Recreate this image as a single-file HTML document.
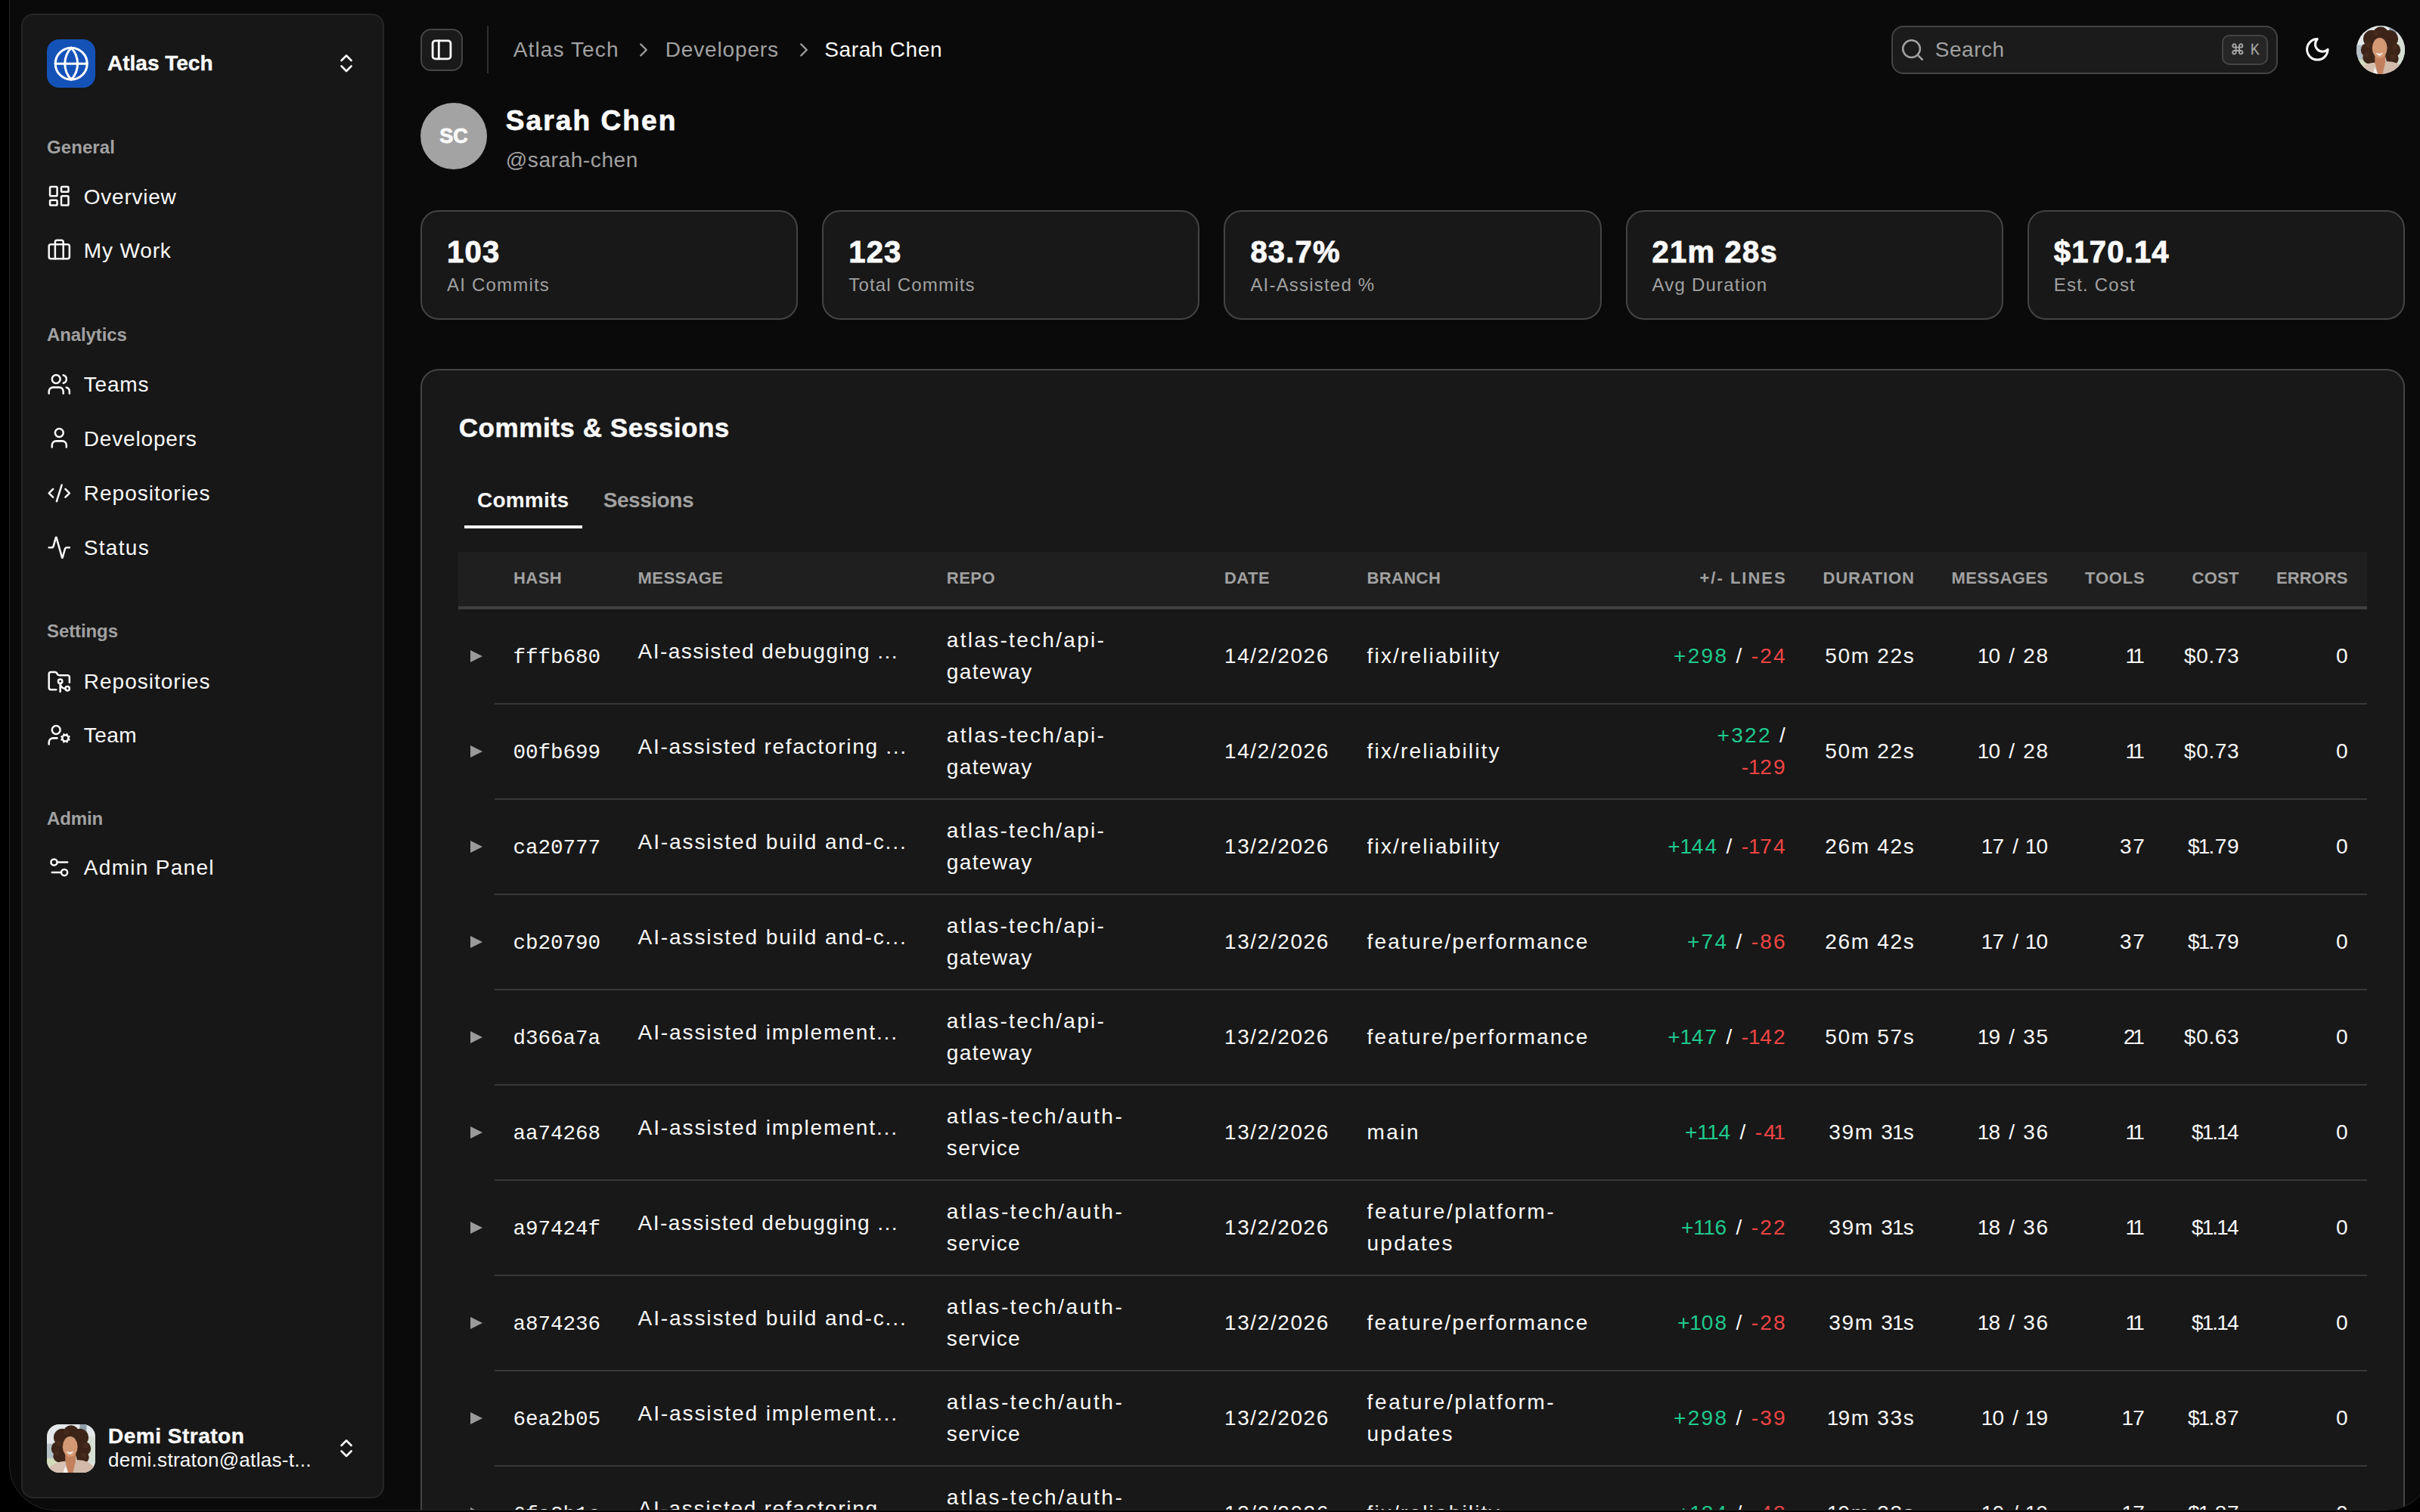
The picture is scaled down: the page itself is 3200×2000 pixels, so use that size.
<!DOCTYPE html>
<html><head><meta charset="utf-8"><title>Sarah Chen - Atlas Tech</title>
<style>
html,body{margin:0;padding:0;background:#000;width:3200px;height:2000px;overflow:hidden}
@media (max-width:2400px){html{zoom:0.5}}
body{position:relative;font-family:"Liberation Sans",sans-serif;color:#fafafa}
#win{position:absolute;left:12px;top:-200px;width:3204px;height:2198px;box-sizing:border-box;background:#0a0a0a;border:1px solid #242424;border-radius:0 0 60px 60px;overflow:hidden}
#c{position:absolute;left:-13px;top:199px;width:3200px;height:2000px}
.t{position:absolute;white-space:nowrap;line-height:1}
</style></head><body>
<div id="win"><div id="c">
<div style="position:absolute;left:28px;top:18px;width:480px;height:1964px;box-sizing:border-box;background:#171717;border:2px solid #262626;border-radius:16px;"></div>
<div style="position:absolute;left:62px;top:52px;width:64px;height:64px;background:#1552b8;border-radius:16px;"></div>
<svg style="position:absolute;left:68.8px;top:58.8px;" width="50.4" height="50.4" viewBox="0 0 24 24" fill="none" stroke="#fff" stroke-width="1.45" stroke-linecap="round" stroke-linejoin="round"><circle cx="12" cy="12" r="10"/><path d="M12 2a14.5 14.5 0 0 0 0 20 14.5 14.5 0 0 0 0-20"/><path d="M2 12h20"/></svg>
<div class="t" style="left:142.00px;top:69.89px;font-size:28px;font-weight:700;color:#fafafa;letter-spacing:0px;-webkit-text-stroke:0.4px #fafafa;">Atlas Tech</div>
<svg style="position:absolute;left:440px;top:64px;" width="36" height="40" viewBox="440 64 36 40" fill="none" stroke="#fafafa" stroke-width="2.6" stroke-linecap="round" stroke-linejoin="round"><path d="M451.5 80 L458 73.5 L464.5 80 M451.5 87.5 L458 94 L464.5 87.5"/></svg>
<div class="t" style="left:62.00px;top:182.68px;font-size:24px;font-weight:700;color:#a1a1a1;letter-spacing:0.08px;">General</div>
<svg style="position:absolute;left:61.75px;top:243.4px;" width="32.6" height="32.6" viewBox="0 0 24 24" fill="none" stroke="#fafafa" stroke-width="1.85" stroke-linecap="round" stroke-linejoin="round"><rect width="7" height="9" x="3" y="3" rx="1"/><rect width="7" height="5" x="14" y="3" rx="1"/><rect width="7" height="9" x="14" y="12" rx="1"/><rect width="7" height="5" x="3" y="16" rx="1"/></svg>
<div class="t" style="left:110.80px;top:246.79px;font-size:28px;font-weight:400;color:#fafafa;letter-spacing:0.76px;">Overview</div>
<svg style="position:absolute;left:61.75px;top:314.9px;" width="32.6" height="32.6" viewBox="0 0 24 24" fill="none" stroke="#fafafa" stroke-width="1.85" stroke-linecap="round" stroke-linejoin="round"><path d="M16 20V4a2 2 0 0 0-2-2h-4a2 2 0 0 0-2 2v16"/><rect width="20" height="14" x="2" y="6" rx="2"/></svg>
<div class="t" style="left:110.80px;top:318.29px;font-size:28px;font-weight:400;color:#fafafa;letter-spacing:0.85px;">My Work</div>
<div class="t" style="left:62.00px;top:430.68px;font-size:24px;font-weight:700;color:#a1a1a1;letter-spacing:-0.1px;">Analytics</div>
<svg style="position:absolute;left:61.75px;top:491.9px;" width="32.6" height="32.6" viewBox="0 0 24 24" fill="none" stroke="#fafafa" stroke-width="1.85" stroke-linecap="round" stroke-linejoin="round"><path d="M16 21v-2a4 4 0 0 0-4-4H6a4 4 0 0 0-4 4v2"/><circle cx="9" cy="7" r="4"/><path d="M22 21v-2a4 4 0 0 0-3-3.87"/><path d="M16 3.13a4 4 0 0 1 0 7.75"/></svg>
<div class="t" style="left:110.80px;top:495.29px;font-size:28px;font-weight:400;color:#fafafa;letter-spacing:0.78px;">Teams</div>
<svg style="position:absolute;left:61.75px;top:563.4px;" width="32.6" height="32.6" viewBox="0 0 24 24" fill="none" stroke="#fafafa" stroke-width="1.85" stroke-linecap="round" stroke-linejoin="round"><path d="M19 21v-2a4 4 0 0 0-4-4H9a4 4 0 0 0-4 4v2"/><circle cx="12" cy="7" r="4"/></svg>
<div class="t" style="left:110.80px;top:566.79px;font-size:28px;font-weight:400;color:#fafafa;letter-spacing:0.82px;">Developers</div>
<svg style="position:absolute;left:61.75px;top:635.9px;" width="32.6" height="32.6" viewBox="0 0 24 24" fill="none" stroke="#fafafa" stroke-width="1.85" stroke-linecap="round" stroke-linejoin="round"><path d="m18 16 4-4-4-4"/><path d="m6 8-4 4 4 4"/><path d="m14.5 4-5 16"/></svg>
<div class="t" style="left:110.80px;top:639.29px;font-size:28px;font-weight:400;color:#fafafa;letter-spacing:1.0px;">Repositories</div>
<svg style="position:absolute;left:61.75px;top:707.9px;" width="32.6" height="32.6" viewBox="0 0 24 24" fill="none" stroke="#fafafa" stroke-width="1.85" stroke-linecap="round" stroke-linejoin="round"><path d="M22 12h-2.48a2 2 0 0 0-1.93 1.46l-2.35 8.36a.25.25 0 0 1-.48 0L9.24 2.18a.25.25 0 0 0-.48 0l-2.35 8.36A2 2 0 0 1 4.49 12H2"/></svg>
<div class="t" style="left:110.80px;top:711.29px;font-size:28px;font-weight:400;color:#fafafa;letter-spacing:1.3px;">Status</div>
<div class="t" style="left:62.00px;top:822.68px;font-size:24px;font-weight:700;color:#a1a1a1;letter-spacing:-0.1px;">Settings</div>
<svg style="position:absolute;left:61.75px;top:884.5px;" width="32.6" height="32.6" viewBox="0 0 24 24" fill="none" stroke="#fafafa" stroke-width="1.85" stroke-linecap="round" stroke-linejoin="round"><path d="M9 20H4a2 2 0 0 1-2-2V5a2 2 0 0 1 2-2h3.9a2 2 0 0 1 1.69.9l.81 1.2a2 2 0 0 0 1.67.9H20a2 2 0 0 1 2 2v5"/><circle cx="13" cy="12" r="2"/><path d="M18 19c-2.8 0-5-2.2-5-5v8"/><circle cx="20" cy="19" r="2"/></svg>
<div class="t" style="left:110.80px;top:887.89px;font-size:28px;font-weight:400;color:#fafafa;letter-spacing:1.0px;">Repositories</div>
<svg style="position:absolute;left:61.75px;top:955.9px;" width="32.6" height="32.6" viewBox="0 0 24 24" fill="none" stroke="#fafafa" stroke-width="1.85" stroke-linecap="round" stroke-linejoin="round"><path d="M10 15H6a4 4 0 0 0-4 4v2"/><path d="m14.305 16.53.923-.382"/><path d="m15.228 13.852-.923-.383"/><path d="m16.852 12.228-.383-.923"/><path d="m16.852 17.772-.383.924"/><path d="m19.148 12.228.383-.923"/><path d="m19.53 18.696-.382-.924"/><path d="m20.772 13.852.924-.383"/><path d="m20.772 16.148.924.383"/><circle cx="18" cy="15" r="3"/><circle cx="9" cy="7" r="4"/></svg>
<div class="t" style="left:110.80px;top:959.29px;font-size:28px;font-weight:400;color:#fafafa;letter-spacing:0.45px;">Team</div>
<div class="t" style="left:62.00px;top:1071.18px;font-size:24px;font-weight:700;color:#a1a1a1;letter-spacing:-0.15px;">Admin</div>
<svg style="position:absolute;left:61.75px;top:1130.9px;" width="32.6" height="32.6" viewBox="0 0 24 24" fill="none" stroke="#fafafa" stroke-width="1.85" stroke-linecap="round" stroke-linejoin="round"><path d="M20 7h-9"/><path d="M14 17H5"/><circle cx="17" cy="17" r="3"/><circle cx="7" cy="7" r="3"/></svg>
<div class="t" style="left:110.80px;top:1134.29px;font-size:28px;font-weight:400;color:#fafafa;letter-spacing:1.3px;">Admin Panel</div>
<div style="position:absolute;left:62px;top:1884px;width:64px;height:64px;border-radius:16px;overflow:hidden"><svg width="100%" height="100%" viewBox="0 0 100 100" preserveAspectRatio="none" style="display:block"><rect width="100" height="100" fill="#e4e8ea"/><rect x="0" y="40" width="25" height="35" fill="#b3c0c6"/><rect x="0" y="70" width="30" height="20" fill="#d3dcbc"/><rect x="68" y="0" width="14" height="90" fill="#8f9dab"/><rect x="84" y="25" width="16" height="55" fill="#d6dfd3"/><g fill="#3d2519"><circle cx="32" cy="27" r="18"/><circle cx="50" cy="18" r="16"/><circle cx="68" cy="27" r="18"/><circle cx="24" cy="50" r="15"/><circle cx="76" cy="50" r="15"/><circle cx="26" cy="66" r="13"/><circle cx="74" cy="68" r="13"/><circle cx="50" cy="45" r="24"/><circle cx="34" cy="76" r="8"/><circle cx="68" cy="80" r="7"/></g><g fill="#5c3a28" opacity="0.35"><circle cx="24" cy="40" r="6"/><circle cx="20" cy="60" r="5"/><circle cx="80" cy="44" r="5"/><circle cx="40" cy="16" r="5"/><circle cx="76" cy="64" r="5"/></g><rect x="38" y="58" width="22" height="42" fill="#c3805d"/><ellipse cx="48" cy="46" rx="15.5" ry="21" fill="#d39874"/><path d="M40 56 Q48 60 55 55 Q52 62 47 62 Q42 61 40 56 Z" fill="#f3ece6"/><path d="M0 100 L6 88 Q22 76 38 76 L44 100 Z" fill="#d6c0b1"/><path d="M54 100 L60 74 Q82 72 98 88 L100 100 Z" fill="#d1baa9"/><path d="M34 100 L38 86 L44 100 Z" fill="#f7f5f2"/></svg></div>
<div class="t" style="left:143.00px;top:1886.29px;font-size:28px;font-weight:700;color:#fafafa;letter-spacing:0.5px;-webkit-text-stroke:0.4px #fafafa;">Demi Straton</div>
<div class="t" style="left:143.00px;top:1917.99px;font-size:26px;font-weight:400;color:#fafafa;letter-spacing:0.3px;">demi.straton@atlas-t...</div>
<svg style="position:absolute;left:440px;top:1896px;" width="36" height="40" viewBox="440 1896 36 40" fill="none" stroke="#fafafa" stroke-width="2.6" stroke-linecap="round" stroke-linejoin="round"><path d="M451.5 1912 L458 1905.5 L464.5 1912 M451.5 1919.5 L458 1926 L464.5 1919.5"/></svg>
<div style="position:absolute;left:556px;top:38px;width:56px;height:56px;box-sizing:border-box;background:#1a1a1a;border:2px solid #444;border-radius:14px;"></div>
<svg style="position:absolute;left:560px;top:42px;" width="48" height="48" viewBox="560 42 48 48" fill="none" stroke="#fafafa" stroke-width="2.8" stroke-linecap="round" stroke-linejoin="round"><rect x="572.1" y="53.9" width="23.8" height="24" rx="3.5"/><path d="M580.3 53.9v24"/></svg>
<div style="position:absolute;left:644px;top:34px;width:2px;height:63px;background:#2e2e2e;"></div>
<div class="t" style="left:678.70px;top:52.29px;font-size:28px;font-weight:400;color:#a1a1a1;letter-spacing:1.13px;">Atlas Tech</div>
<svg style="position:absolute;left:836px;top:51px;" width="30" height="30" viewBox="0 0 24 24" fill="none" stroke="#a1a1a1" stroke-width="1.9" stroke-linecap="round" stroke-linejoin="round"><path d="m9 18 6-6-6-6"/></svg>
<div class="t" style="left:879.70px;top:52.29px;font-size:28px;font-weight:400;color:#a1a1a1;letter-spacing:0.86px;">Developers</div>
<svg style="position:absolute;left:1048px;top:51px;" width="30" height="30" viewBox="0 0 24 24" fill="none" stroke="#a1a1a1" stroke-width="1.9" stroke-linecap="round" stroke-linejoin="round"><path d="m9 18 6-6-6-6"/></svg>
<div class="t" style="left:1090.30px;top:52.29px;font-size:28px;font-weight:400;color:#fafafa;letter-spacing:0.65px;">Sarah Chen</div>
<div style="position:absolute;left:2501px;top:34px;width:511px;height:64px;box-sizing:border-box;background:#1b1b1b;border:2px solid #444;border-radius:16px;"></div>
<svg style="position:absolute;left:2512px;top:49px;" width="34" height="34" viewBox="0 0 24 24" fill="none" stroke="#a1a1a1" stroke-width="1.8" stroke-linecap="round" stroke-linejoin="round"><circle cx="11" cy="11" r="8"/><path d="m21 21-4.3-4.3"/></svg>
<div class="t" style="left:2558.70px;top:52.29px;font-size:28px;font-weight:400;color:#a1a1a1;letter-spacing:0.55px;">Search</div>
<div style="position:absolute;left:2938px;top:46px;width:61px;height:40px;box-sizing:border-box;background:#262626;border:2px solid #444;border-radius:10px;"></div>
<svg style="position:absolute;left:2950.1px;top:55.7px;" width="17.6" height="17.6" viewBox="0 0 24 24" fill="none" stroke="#a8a8a8" stroke-width="2.6" stroke-linecap="round" stroke-linejoin="round"><path d="M15 6v12a3 3 0 1 0 3-3H6a3 3 0 1 0 3 3V6a3 3 0 1 0-3 3h12a3 3 0 1 0-3-3"/></svg>
<div class="t" style="left:2975.50px;top:54.22px;font-size:21px;font-weight:400;color:#a8a8a8;letter-spacing:0px;-webkit-text-stroke:0.35px #a8a8a8;transform:scaleX(0.82);transform-origin:0 0;">K</div>
<svg style="position:absolute;left:3045.6px;top:47.4px;" width="36.7" height="36.7" viewBox="0 0 24 24" fill="none" stroke="#fafafa" stroke-width="1.96" stroke-linecap="round" stroke-linejoin="round"><path d="M12 3a6 6 0 0 0 9 9 9 9 0 1 1-9-9Z"/></svg>
<div style="position:absolute;left:3116px;top:34px;width:64px;height:64px;border-radius:50%;overflow:hidden;box-sizing:border-box"><svg width="100%" height="100%" viewBox="0 0 100 100" preserveAspectRatio="none" style="display:block"><rect width="100" height="100" fill="#e4e8ea"/><rect x="0" y="40" width="25" height="35" fill="#b3c0c6"/><rect x="0" y="70" width="30" height="20" fill="#d3dcbc"/><rect x="68" y="0" width="14" height="90" fill="#8f9dab"/><rect x="84" y="25" width="16" height="55" fill="#d6dfd3"/><g fill="#3d2519"><circle cx="32" cy="27" r="18"/><circle cx="50" cy="18" r="16"/><circle cx="68" cy="27" r="18"/><circle cx="24" cy="50" r="15"/><circle cx="76" cy="50" r="15"/><circle cx="26" cy="66" r="13"/><circle cx="74" cy="68" r="13"/><circle cx="50" cy="45" r="24"/><circle cx="34" cy="76" r="8"/><circle cx="68" cy="80" r="7"/></g><g fill="#5c3a28" opacity="0.35"><circle cx="24" cy="40" r="6"/><circle cx="20" cy="60" r="5"/><circle cx="80" cy="44" r="5"/><circle cx="40" cy="16" r="5"/><circle cx="76" cy="64" r="5"/></g><rect x="38" y="58" width="22" height="42" fill="#c3805d"/><ellipse cx="48" cy="46" rx="15.5" ry="21" fill="#d39874"/><path d="M40 56 Q48 60 55 55 Q52 62 47 62 Q42 61 40 56 Z" fill="#f3ece6"/><path d="M0 100 L6 88 Q22 76 38 76 L44 100 Z" fill="#d6c0b1"/><path d="M54 100 L60 74 Q82 72 98 88 L100 100 Z" fill="#d1baa9"/><path d="M34 100 L38 86 L44 100 Z" fill="#f7f5f2"/></svg></div>
<div style="position:absolute;left:556px;top:136px;width:88px;height:88px;background:#a3a3a3;border-radius:50%;"></div>
<div class="t" style="left:556px;width:88px;text-align:center;top:167.14px;font-size:27px;font-weight:700;color:#fafafa;-webkit-text-stroke:0.9px #fafafa">SC</div>
<div class="t" style="left:668.80px;top:141.17px;font-size:37px;font-weight:700;color:#fafafa;letter-spacing:2.1px;-webkit-text-stroke:0.8px #fafafa;">Sarah Chen</div>
<div class="t" style="left:668.80px;top:197.79px;font-size:28px;font-weight:400;color:#a1a1a1;letter-spacing:0.6px;">@sarah-chen</div>
<div style="position:absolute;left:556.0px;top:278px;width:499.2px;height:145px;box-sizing:border-box;background:#181818;border:2px solid #444;border-radius:24px;"></div>
<div class="t" style="left:591.00px;top:312.53px;font-size:40px;font-weight:700;color:#fafafa;letter-spacing:1.2px;-webkit-text-stroke:0.9px #fafafa;">103</div>
<div class="t" style="left:591.00px;top:364.68px;font-size:24px;font-weight:400;color:#a1a1a1;letter-spacing:1.2px;">AI Commits</div>
<div style="position:absolute;left:1087.2px;top:278px;width:499.2px;height:145px;box-sizing:border-box;background:#181818;border:2px solid #444;border-radius:24px;"></div>
<div class="t" style="left:1122.20px;top:312.53px;font-size:40px;font-weight:700;color:#fafafa;letter-spacing:1.2px;-webkit-text-stroke:0.9px #fafafa;">123</div>
<div class="t" style="left:1122.20px;top:364.68px;font-size:24px;font-weight:400;color:#a1a1a1;letter-spacing:1.2px;">Total Commits</div>
<div style="position:absolute;left:1618.4px;top:278px;width:499.2px;height:145px;box-sizing:border-box;background:#181818;border:2px solid #444;border-radius:24px;"></div>
<div class="t" style="left:1653.40px;top:312.53px;font-size:40px;font-weight:700;color:#fafafa;letter-spacing:1.2px;-webkit-text-stroke:0.9px #fafafa;">83.7%</div>
<div class="t" style="left:1653.40px;top:364.68px;font-size:24px;font-weight:400;color:#a1a1a1;letter-spacing:1.2px;">AI-Assisted %</div>
<div style="position:absolute;left:2149.6px;top:278px;width:499.2px;height:145px;box-sizing:border-box;background:#181818;border:2px solid #444;border-radius:24px;"></div>
<div class="t" style="left:2184.60px;top:312.53px;font-size:40px;font-weight:700;color:#fafafa;letter-spacing:1.2px;-webkit-text-stroke:0.9px #fafafa;">21m 28s</div>
<div class="t" style="left:2184.60px;top:364.68px;font-size:24px;font-weight:400;color:#a1a1a1;letter-spacing:1.2px;">Avg Duration</div>
<div style="position:absolute;left:2680.8px;top:278px;width:499.2px;height:145px;box-sizing:border-box;background:#181818;border:2px solid #444;border-radius:24px;"></div>
<div class="t" style="left:2715.80px;top:312.53px;font-size:40px;font-weight:700;color:#fafafa;letter-spacing:1.2px;-webkit-text-stroke:0.9px #fafafa;">$170.14</div>
<div class="t" style="left:2715.80px;top:364.68px;font-size:24px;font-weight:400;color:#a1a1a1;letter-spacing:1.2px;">Est. Cost</div>
<div style="position:absolute;left:556px;top:488px;width:2624px;height:1600px;box-sizing:border-box;background:#181818;border:2px solid #444;border-radius:24px;"></div>
<div class="t" style="left:606.80px;top:548.27px;font-size:35px;font-weight:700;color:#fafafa;letter-spacing:0.55px;-webkit-text-stroke:0.5px #fafafa;">Commits &amp; Sessions</div>
<div class="t" style="left:631.00px;top:648.29px;font-size:28px;font-weight:700;color:#fafafa;letter-spacing:0.2px;">Commits</div>
<div class="t" style="left:797.70px;top:648.29px;font-size:28px;font-weight:700;color:#a1a1a1;letter-spacing:-0.45px;">Sessions</div>
<div style="position:absolute;left:614px;top:694.5px;width:156px;height:4px;background:#fafafa;"></div>
<div style="position:absolute;left:606px;top:730px;width:2524px;height:72px;background:#1f1f1f;"></div>
<div style="position:absolute;left:606px;top:802px;width:2524px;height:4px;background:#404040;"></div>
<div class="t" style="left:679.00px;top:753.87px;font-size:22px;font-weight:700;color:#a1a1a1;letter-spacing:0.45px;">HASH</div>
<div class="t" style="left:843.60px;top:753.87px;font-size:22px;font-weight:700;color:#a1a1a1;letter-spacing:0.4px;">MESSAGE</div>
<div class="t" style="left:1251.80px;top:753.87px;font-size:22px;font-weight:700;color:#a1a1a1;letter-spacing:0.45px;">REPO</div>
<div class="t" style="left:1619.00px;top:753.87px;font-size:22px;font-weight:700;color:#a1a1a1;letter-spacing:0.48px;">DATE</div>
<div class="t" style="left:1807.60px;top:753.87px;font-size:22px;font-weight:700;color:#a1a1a1;letter-spacing:0.37px;">BRANCH</div>
<div class="t" style="right:837.30px;text-align:right;top:753.87px;font-size:22px;font-weight:700;color:#a1a1a1;letter-spacing:2.0px;">+/- LINES</div>
<div class="t" style="right:668.37px;text-align:right;top:753.87px;font-size:22px;font-weight:700;color:#a1a1a1;letter-spacing:0.83px;">DURATION</div>
<div class="t" style="right:491.60px;text-align:right;top:753.87px;font-size:22px;font-weight:700;color:#a1a1a1;letter-spacing:0.4px;">MESSAGES</div>
<div class="t" style="right:363.35px;text-align:right;top:753.87px;font-size:22px;font-weight:700;color:#a1a1a1;letter-spacing:0.85px;">TOOLS</div>
<div class="t" style="right:239.20px;text-align:right;top:753.87px;font-size:22px;font-weight:700;color:#a1a1a1;letter-spacing:0.3px;">COST</div>
<div class="t" style="right:95.40px;text-align:right;top:753.87px;font-size:22px;font-weight:700;color:#a1a1a1;letter-spacing:0.1px;">ERRORS</div>
<div style="position:absolute;left:654px;top:930px;width:2476px;height:2px;background:#383838;"></div>
<div style="position:absolute;left:622px;top:859.5px;width:0;height:0;border-left:16px solid #9a9a9a;border-top:8.5px solid transparent;border-bottom:8.5px solid transparent"></div>
<div class="t" style="left:678.50px;top:855.93px;font-size:27.5px;font-weight:400;color:#fafafa;letter-spacing:0px;font-family:'Liberation Mono',monospace;">fffb680</div>
<div class="t" style="left:843.60px;top:847.79px;font-size:28px;font-weight:400;color:#fafafa;letter-spacing:1.45px;">AI-assisted debugging ...</div>
<div class="t" style="left:1251.80px;top:832.79px;font-size:28px;font-weight:400;color:#fafafa;letter-spacing:2.3px;">atlas-tech/api-</div>
<div class="t" style="left:1251.80px;top:874.79px;font-size:28px;font-weight:400;color:#fafafa;letter-spacing:1.35px;">gateway</div>
<div class="t" style="left:1619.00px;top:853.79px;font-size:28px;font-weight:400;color:#fafafa;letter-spacing:1.6px;">14/2/2026</div>
<div class="t" style="left:1807.60px;top:853.79px;font-size:28px;font-weight:400;color:#fafafa;letter-spacing:2.16px;">fix/reliability</div>
<div class="t" style="right:837.00px;text-align:right;top:853.79px;font-size:28px;font-weight:400;color:#fafafa;letter-spacing:2.3px;"><span style="color:#1fc98e">+298</span> / <span style="color:#ef4444">-24</span></div>
<div class="t" style="right:667.50px;text-align:right;top:853.79px;font-size:28px;font-weight:400;color:#fafafa;letter-spacing:1.7px;">50m 22s</div>
<div class="t" style="right:490.30px;text-align:right;top:853.79px;font-size:28px;font-weight:400;color:#fafafa;letter-spacing:1.7px;"><span style="margin-left:-2.50px;letter-spacing:-0.80px">1</span>0 / 28</div>
<div class="t" style="right:362.50px;text-align:right;top:853.79px;font-size:28px;font-weight:400;color:#fafafa;letter-spacing:1.7px;"><span style="margin-left:-2.50px;letter-spacing:-0.80px">1</span><span style="margin-left:-5.00px">1</span></div>
<div class="t" style="right:238.90px;text-align:right;top:853.79px;font-size:28px;font-weight:400;color:#fafafa;letter-spacing:0.6px;">$0.73</div>
<div class="t" style="right:93.80px;text-align:right;top:853.79px;font-size:28px;font-weight:400;color:#fafafa;letter-spacing:1.7px;">0</div>
<div style="position:absolute;left:654px;top:1056px;width:2476px;height:2px;background:#383838;"></div>
<div style="position:absolute;left:622px;top:985.5px;width:0;height:0;border-left:16px solid #9a9a9a;border-top:8.5px solid transparent;border-bottom:8.5px solid transparent"></div>
<div class="t" style="left:678.50px;top:981.93px;font-size:27.5px;font-weight:400;color:#fafafa;letter-spacing:0px;font-family:'Liberation Mono',monospace;">00fb699</div>
<div class="t" style="left:843.60px;top:973.79px;font-size:28px;font-weight:400;color:#fafafa;letter-spacing:1.72px;">AI-assisted refactoring ...</div>
<div class="t" style="left:1251.80px;top:958.79px;font-size:28px;font-weight:400;color:#fafafa;letter-spacing:2.3px;">atlas-tech/api-</div>
<div class="t" style="left:1251.80px;top:1000.79px;font-size:28px;font-weight:400;color:#fafafa;letter-spacing:1.35px;">gateway</div>
<div class="t" style="left:1619.00px;top:979.79px;font-size:28px;font-weight:400;color:#fafafa;letter-spacing:1.6px;">14/2/2026</div>
<div class="t" style="left:1807.60px;top:979.79px;font-size:28px;font-weight:400;color:#fafafa;letter-spacing:2.16px;">fix/reliability</div>
<div class="t" style="right:837.00px;text-align:right;top:958.79px;font-size:28px;font-weight:400;color:#fafafa;letter-spacing:2.3px;"><span style="color:#1fc98e">+322</span> /</div>
<div class="t" style="right:837.00px;text-align:right;top:1000.79px;font-size:28px;font-weight:400;color:#fafafa;letter-spacing:2.3px;"><span style="color:#ef4444">-<span style="margin-left:-2.50px;letter-spacing:-0.20px">1</span>29</span></div>
<div class="t" style="right:667.50px;text-align:right;top:979.79px;font-size:28px;font-weight:400;color:#fafafa;letter-spacing:1.7px;">50m 22s</div>
<div class="t" style="right:490.30px;text-align:right;top:979.79px;font-size:28px;font-weight:400;color:#fafafa;letter-spacing:1.7px;"><span style="margin-left:-2.50px;letter-spacing:-0.80px">1</span>0 / 28</div>
<div class="t" style="right:362.50px;text-align:right;top:979.79px;font-size:28px;font-weight:400;color:#fafafa;letter-spacing:1.7px;"><span style="margin-left:-2.50px;letter-spacing:-0.80px">1</span><span style="margin-left:-5.00px">1</span></div>
<div class="t" style="right:238.90px;text-align:right;top:979.79px;font-size:28px;font-weight:400;color:#fafafa;letter-spacing:0.6px;">$0.73</div>
<div class="t" style="right:93.80px;text-align:right;top:979.79px;font-size:28px;font-weight:400;color:#fafafa;letter-spacing:1.7px;">0</div>
<div style="position:absolute;left:654px;top:1182px;width:2476px;height:2px;background:#383838;"></div>
<div style="position:absolute;left:622px;top:1111.5px;width:0;height:0;border-left:16px solid #9a9a9a;border-top:8.5px solid transparent;border-bottom:8.5px solid transparent"></div>
<div class="t" style="left:678.50px;top:1107.93px;font-size:27.5px;font-weight:400;color:#fafafa;letter-spacing:0px;font-family:'Liberation Mono',monospace;">ca20777</div>
<div class="t" style="left:843.60px;top:1099.79px;font-size:28px;font-weight:400;color:#fafafa;letter-spacing:1.9px;">AI-assisted build and-c...</div>
<div class="t" style="left:1251.80px;top:1084.79px;font-size:28px;font-weight:400;color:#fafafa;letter-spacing:2.3px;">atlas-tech/api-</div>
<div class="t" style="left:1251.80px;top:1126.79px;font-size:28px;font-weight:400;color:#fafafa;letter-spacing:1.35px;">gateway</div>
<div class="t" style="left:1619.00px;top:1105.79px;font-size:28px;font-weight:400;color:#fafafa;letter-spacing:1.6px;">13/2/2026</div>
<div class="t" style="left:1807.60px;top:1105.79px;font-size:28px;font-weight:400;color:#fafafa;letter-spacing:2.16px;">fix/reliability</div>
<div class="t" style="right:837.00px;text-align:right;top:1105.79px;font-size:28px;font-weight:400;color:#fafafa;letter-spacing:2.3px;"><span style="color:#1fc98e">+<span style="margin-left:-2.50px;letter-spacing:-0.20px">1</span>44</span> / <span style="color:#ef4444">-<span style="margin-left:-2.50px;letter-spacing:-0.20px">1</span>74</span></div>
<div class="t" style="right:667.50px;text-align:right;top:1105.79px;font-size:28px;font-weight:400;color:#fafafa;letter-spacing:1.7px;">26m 42s</div>
<div class="t" style="right:490.30px;text-align:right;top:1105.79px;font-size:28px;font-weight:400;color:#fafafa;letter-spacing:1.7px;"><span style="margin-left:-2.50px;letter-spacing:-0.80px">1</span>7 / <span style="margin-left:-2.50px;letter-spacing:-0.80px">1</span>0</div>
<div class="t" style="right:362.50px;text-align:right;top:1105.79px;font-size:28px;font-weight:400;color:#fafafa;letter-spacing:1.7px;">37</div>
<div class="t" style="right:238.90px;text-align:right;top:1105.79px;font-size:28px;font-weight:400;color:#fafafa;letter-spacing:0.6px;">$<span style="margin-left:-2.50px;letter-spacing:-1.90px">1</span>.79</div>
<div class="t" style="right:93.80px;text-align:right;top:1105.79px;font-size:28px;font-weight:400;color:#fafafa;letter-spacing:1.7px;">0</div>
<div style="position:absolute;left:654px;top:1308px;width:2476px;height:2px;background:#383838;"></div>
<div style="position:absolute;left:622px;top:1237.5px;width:0;height:0;border-left:16px solid #9a9a9a;border-top:8.5px solid transparent;border-bottom:8.5px solid transparent"></div>
<div class="t" style="left:678.50px;top:1233.93px;font-size:27.5px;font-weight:400;color:#fafafa;letter-spacing:0px;font-family:'Liberation Mono',monospace;">cb20790</div>
<div class="t" style="left:843.60px;top:1225.79px;font-size:28px;font-weight:400;color:#fafafa;letter-spacing:1.9px;">AI-assisted build and-c...</div>
<div class="t" style="left:1251.80px;top:1210.79px;font-size:28px;font-weight:400;color:#fafafa;letter-spacing:2.3px;">atlas-tech/api-</div>
<div class="t" style="left:1251.80px;top:1252.79px;font-size:28px;font-weight:400;color:#fafafa;letter-spacing:1.35px;">gateway</div>
<div class="t" style="left:1619.00px;top:1231.79px;font-size:28px;font-weight:400;color:#fafafa;letter-spacing:1.6px;">13/2/2026</div>
<div class="t" style="left:1807.60px;top:1231.79px;font-size:28px;font-weight:400;color:#fafafa;letter-spacing:2.2px;">feature/performance</div>
<div class="t" style="right:837.00px;text-align:right;top:1231.79px;font-size:28px;font-weight:400;color:#fafafa;letter-spacing:2.3px;"><span style="color:#1fc98e">+74</span> / <span style="color:#ef4444">-86</span></div>
<div class="t" style="right:667.50px;text-align:right;top:1231.79px;font-size:28px;font-weight:400;color:#fafafa;letter-spacing:1.7px;">26m 42s</div>
<div class="t" style="right:490.30px;text-align:right;top:1231.79px;font-size:28px;font-weight:400;color:#fafafa;letter-spacing:1.7px;"><span style="margin-left:-2.50px;letter-spacing:-0.80px">1</span>7 / <span style="margin-left:-2.50px;letter-spacing:-0.80px">1</span>0</div>
<div class="t" style="right:362.50px;text-align:right;top:1231.79px;font-size:28px;font-weight:400;color:#fafafa;letter-spacing:1.7px;">37</div>
<div class="t" style="right:238.90px;text-align:right;top:1231.79px;font-size:28px;font-weight:400;color:#fafafa;letter-spacing:0.6px;">$<span style="margin-left:-2.50px;letter-spacing:-1.90px">1</span>.79</div>
<div class="t" style="right:93.80px;text-align:right;top:1231.79px;font-size:28px;font-weight:400;color:#fafafa;letter-spacing:1.7px;">0</div>
<div style="position:absolute;left:654px;top:1434px;width:2476px;height:2px;background:#383838;"></div>
<div style="position:absolute;left:622px;top:1363.5px;width:0;height:0;border-left:16px solid #9a9a9a;border-top:8.5px solid transparent;border-bottom:8.5px solid transparent"></div>
<div class="t" style="left:678.50px;top:1359.93px;font-size:27.5px;font-weight:400;color:#fafafa;letter-spacing:0px;font-family:'Liberation Mono',monospace;">d366a7a</div>
<div class="t" style="left:843.60px;top:1351.79px;font-size:28px;font-weight:400;color:#fafafa;letter-spacing:1.9px;">AI-assisted implement...</div>
<div class="t" style="left:1251.80px;top:1336.79px;font-size:28px;font-weight:400;color:#fafafa;letter-spacing:2.3px;">atlas-tech/api-</div>
<div class="t" style="left:1251.80px;top:1378.79px;font-size:28px;font-weight:400;color:#fafafa;letter-spacing:1.35px;">gateway</div>
<div class="t" style="left:1619.00px;top:1357.79px;font-size:28px;font-weight:400;color:#fafafa;letter-spacing:1.6px;">13/2/2026</div>
<div class="t" style="left:1807.60px;top:1357.79px;font-size:28px;font-weight:400;color:#fafafa;letter-spacing:2.2px;">feature/performance</div>
<div class="t" style="right:837.00px;text-align:right;top:1357.79px;font-size:28px;font-weight:400;color:#fafafa;letter-spacing:2.3px;"><span style="color:#1fc98e">+<span style="margin-left:-2.50px;letter-spacing:-0.20px">1</span>47</span> / <span style="color:#ef4444">-<span style="margin-left:-2.50px;letter-spacing:-0.20px">1</span>42</span></div>
<div class="t" style="right:667.50px;text-align:right;top:1357.79px;font-size:28px;font-weight:400;color:#fafafa;letter-spacing:1.7px;">50m 57s</div>
<div class="t" style="right:490.30px;text-align:right;top:1357.79px;font-size:28px;font-weight:400;color:#fafafa;letter-spacing:1.7px;"><span style="margin-left:-2.50px;letter-spacing:-0.80px">1</span>9 / 35</div>
<div class="t" style="right:362.50px;text-align:right;top:1357.79px;font-size:28px;font-weight:400;color:#fafafa;letter-spacing:1.7px;">2<span style="margin-left:-5.00px">1</span></div>
<div class="t" style="right:238.90px;text-align:right;top:1357.79px;font-size:28px;font-weight:400;color:#fafafa;letter-spacing:0.6px;">$0.63</div>
<div class="t" style="right:93.80px;text-align:right;top:1357.79px;font-size:28px;font-weight:400;color:#fafafa;letter-spacing:1.7px;">0</div>
<div style="position:absolute;left:654px;top:1560px;width:2476px;height:2px;background:#383838;"></div>
<div style="position:absolute;left:622px;top:1489.5px;width:0;height:0;border-left:16px solid #9a9a9a;border-top:8.5px solid transparent;border-bottom:8.5px solid transparent"></div>
<div class="t" style="left:678.50px;top:1485.93px;font-size:27.5px;font-weight:400;color:#fafafa;letter-spacing:0px;font-family:'Liberation Mono',monospace;">aa74268</div>
<div class="t" style="left:843.60px;top:1477.79px;font-size:28px;font-weight:400;color:#fafafa;letter-spacing:1.9px;">AI-assisted implement...</div>
<div class="t" style="left:1251.80px;top:1462.79px;font-size:28px;font-weight:400;color:#fafafa;letter-spacing:2.6px;">atlas-tech/auth-</div>
<div class="t" style="left:1251.80px;top:1504.79px;font-size:28px;font-weight:400;color:#fafafa;letter-spacing:1.35px;">service</div>
<div class="t" style="left:1619.00px;top:1483.79px;font-size:28px;font-weight:400;color:#fafafa;letter-spacing:1.6px;">13/2/2026</div>
<div class="t" style="left:1807.60px;top:1483.79px;font-size:28px;font-weight:400;color:#fafafa;letter-spacing:2.4px;">main</div>
<div class="t" style="right:837.00px;text-align:right;top:1483.79px;font-size:28px;font-weight:400;color:#fafafa;letter-spacing:2.3px;"><span style="color:#1fc98e">+<span style="margin-left:-2.50px;letter-spacing:-0.20px">1</span><span style="margin-left:-2.50px;letter-spacing:-0.20px">1</span>4</span> / <span style="color:#ef4444">-4<span style="margin-left:-5.00px">1</span></span></div>
<div class="t" style="right:667.50px;text-align:right;top:1483.79px;font-size:28px;font-weight:400;color:#fafafa;letter-spacing:1.7px;">39m 3<span style="margin-left:-2.50px;letter-spacing:-0.80px">1</span>s</div>
<div class="t" style="right:490.30px;text-align:right;top:1483.79px;font-size:28px;font-weight:400;color:#fafafa;letter-spacing:1.7px;"><span style="margin-left:-2.50px;letter-spacing:-0.80px">1</span>8 / 36</div>
<div class="t" style="right:362.50px;text-align:right;top:1483.79px;font-size:28px;font-weight:400;color:#fafafa;letter-spacing:1.7px;"><span style="margin-left:-2.50px;letter-spacing:-0.80px">1</span><span style="margin-left:-5.00px">1</span></div>
<div class="t" style="right:238.90px;text-align:right;top:1483.79px;font-size:28px;font-weight:400;color:#fafafa;letter-spacing:0.6px;">$<span style="margin-left:-2.50px;letter-spacing:-1.90px">1</span>.<span style="margin-left:-2.50px;letter-spacing:-1.90px">1</span>4</div>
<div class="t" style="right:93.80px;text-align:right;top:1483.79px;font-size:28px;font-weight:400;color:#fafafa;letter-spacing:1.7px;">0</div>
<div style="position:absolute;left:654px;top:1686px;width:2476px;height:2px;background:#383838;"></div>
<div style="position:absolute;left:622px;top:1615.5px;width:0;height:0;border-left:16px solid #9a9a9a;border-top:8.5px solid transparent;border-bottom:8.5px solid transparent"></div>
<div class="t" style="left:678.50px;top:1611.93px;font-size:27.5px;font-weight:400;color:#fafafa;letter-spacing:0px;font-family:'Liberation Mono',monospace;">a97424f</div>
<div class="t" style="left:843.60px;top:1603.79px;font-size:28px;font-weight:400;color:#fafafa;letter-spacing:1.45px;">AI-assisted debugging ...</div>
<div class="t" style="left:1251.80px;top:1588.79px;font-size:28px;font-weight:400;color:#fafafa;letter-spacing:2.6px;">atlas-tech/auth-</div>
<div class="t" style="left:1251.80px;top:1630.79px;font-size:28px;font-weight:400;color:#fafafa;letter-spacing:1.35px;">service</div>
<div class="t" style="left:1619.00px;top:1609.79px;font-size:28px;font-weight:400;color:#fafafa;letter-spacing:1.6px;">13/2/2026</div>
<div class="t" style="left:1807.60px;top:1588.79px;font-size:28px;font-weight:400;color:#fafafa;letter-spacing:2.6px;">feature/platform-</div>
<div class="t" style="left:1807.60px;top:1630.79px;font-size:28px;font-weight:400;color:#fafafa;letter-spacing:2.2px;">updates</div>
<div class="t" style="right:837.00px;text-align:right;top:1609.79px;font-size:28px;font-weight:400;color:#fafafa;letter-spacing:2.3px;"><span style="color:#1fc98e">+<span style="margin-left:-2.50px;letter-spacing:-0.20px">1</span><span style="margin-left:-2.50px;letter-spacing:-0.20px">1</span>6</span> / <span style="color:#ef4444">-22</span></div>
<div class="t" style="right:667.50px;text-align:right;top:1609.79px;font-size:28px;font-weight:400;color:#fafafa;letter-spacing:1.7px;">39m 3<span style="margin-left:-2.50px;letter-spacing:-0.80px">1</span>s</div>
<div class="t" style="right:490.30px;text-align:right;top:1609.79px;font-size:28px;font-weight:400;color:#fafafa;letter-spacing:1.7px;"><span style="margin-left:-2.50px;letter-spacing:-0.80px">1</span>8 / 36</div>
<div class="t" style="right:362.50px;text-align:right;top:1609.79px;font-size:28px;font-weight:400;color:#fafafa;letter-spacing:1.7px;"><span style="margin-left:-2.50px;letter-spacing:-0.80px">1</span><span style="margin-left:-5.00px">1</span></div>
<div class="t" style="right:238.90px;text-align:right;top:1609.79px;font-size:28px;font-weight:400;color:#fafafa;letter-spacing:0.6px;">$<span style="margin-left:-2.50px;letter-spacing:-1.90px">1</span>.<span style="margin-left:-2.50px;letter-spacing:-1.90px">1</span>4</div>
<div class="t" style="right:93.80px;text-align:right;top:1609.79px;font-size:28px;font-weight:400;color:#fafafa;letter-spacing:1.7px;">0</div>
<div style="position:absolute;left:654px;top:1812px;width:2476px;height:2px;background:#383838;"></div>
<div style="position:absolute;left:622px;top:1741.5px;width:0;height:0;border-left:16px solid #9a9a9a;border-top:8.5px solid transparent;border-bottom:8.5px solid transparent"></div>
<div class="t" style="left:678.50px;top:1737.93px;font-size:27.5px;font-weight:400;color:#fafafa;letter-spacing:0px;font-family:'Liberation Mono',monospace;">a874236</div>
<div class="t" style="left:843.60px;top:1729.79px;font-size:28px;font-weight:400;color:#fafafa;letter-spacing:1.9px;">AI-assisted build and-c...</div>
<div class="t" style="left:1251.80px;top:1714.79px;font-size:28px;font-weight:400;color:#fafafa;letter-spacing:2.6px;">atlas-tech/auth-</div>
<div class="t" style="left:1251.80px;top:1756.79px;font-size:28px;font-weight:400;color:#fafafa;letter-spacing:1.35px;">service</div>
<div class="t" style="left:1619.00px;top:1735.79px;font-size:28px;font-weight:400;color:#fafafa;letter-spacing:1.6px;">13/2/2026</div>
<div class="t" style="left:1807.60px;top:1735.79px;font-size:28px;font-weight:400;color:#fafafa;letter-spacing:2.2px;">feature/performance</div>
<div class="t" style="right:837.00px;text-align:right;top:1735.79px;font-size:28px;font-weight:400;color:#fafafa;letter-spacing:2.3px;"><span style="color:#1fc98e">+<span style="margin-left:-2.50px;letter-spacing:-0.20px">1</span>08</span> / <span style="color:#ef4444">-28</span></div>
<div class="t" style="right:667.50px;text-align:right;top:1735.79px;font-size:28px;font-weight:400;color:#fafafa;letter-spacing:1.7px;">39m 3<span style="margin-left:-2.50px;letter-spacing:-0.80px">1</span>s</div>
<div class="t" style="right:490.30px;text-align:right;top:1735.79px;font-size:28px;font-weight:400;color:#fafafa;letter-spacing:1.7px;"><span style="margin-left:-2.50px;letter-spacing:-0.80px">1</span>8 / 36</div>
<div class="t" style="right:362.50px;text-align:right;top:1735.79px;font-size:28px;font-weight:400;color:#fafafa;letter-spacing:1.7px;"><span style="margin-left:-2.50px;letter-spacing:-0.80px">1</span><span style="margin-left:-5.00px">1</span></div>
<div class="t" style="right:238.90px;text-align:right;top:1735.79px;font-size:28px;font-weight:400;color:#fafafa;letter-spacing:0.6px;">$<span style="margin-left:-2.50px;letter-spacing:-1.90px">1</span>.<span style="margin-left:-2.50px;letter-spacing:-1.90px">1</span>4</div>
<div class="t" style="right:93.80px;text-align:right;top:1735.79px;font-size:28px;font-weight:400;color:#fafafa;letter-spacing:1.7px;">0</div>
<div style="position:absolute;left:654px;top:1938px;width:2476px;height:2px;background:#383838;"></div>
<div style="position:absolute;left:622px;top:1867.5px;width:0;height:0;border-left:16px solid #9a9a9a;border-top:8.5px solid transparent;border-bottom:8.5px solid transparent"></div>
<div class="t" style="left:678.50px;top:1863.93px;font-size:27.5px;font-weight:400;color:#fafafa;letter-spacing:0px;font-family:'Liberation Mono',monospace;">6ea2b05</div>
<div class="t" style="left:843.60px;top:1855.79px;font-size:28px;font-weight:400;color:#fafafa;letter-spacing:1.9px;">AI-assisted implement...</div>
<div class="t" style="left:1251.80px;top:1840.79px;font-size:28px;font-weight:400;color:#fafafa;letter-spacing:2.6px;">atlas-tech/auth-</div>
<div class="t" style="left:1251.80px;top:1882.79px;font-size:28px;font-weight:400;color:#fafafa;letter-spacing:1.35px;">service</div>
<div class="t" style="left:1619.00px;top:1861.79px;font-size:28px;font-weight:400;color:#fafafa;letter-spacing:1.6px;">13/2/2026</div>
<div class="t" style="left:1807.60px;top:1840.79px;font-size:28px;font-weight:400;color:#fafafa;letter-spacing:2.6px;">feature/platform-</div>
<div class="t" style="left:1807.60px;top:1882.79px;font-size:28px;font-weight:400;color:#fafafa;letter-spacing:2.2px;">updates</div>
<div class="t" style="right:837.00px;text-align:right;top:1861.79px;font-size:28px;font-weight:400;color:#fafafa;letter-spacing:2.3px;"><span style="color:#1fc98e">+298</span> / <span style="color:#ef4444">-39</span></div>
<div class="t" style="right:667.50px;text-align:right;top:1861.79px;font-size:28px;font-weight:400;color:#fafafa;letter-spacing:1.7px;"><span style="margin-left:-2.50px;letter-spacing:-0.80px">1</span>9m 33s</div>
<div class="t" style="right:490.30px;text-align:right;top:1861.79px;font-size:28px;font-weight:400;color:#fafafa;letter-spacing:1.7px;"><span style="margin-left:-2.50px;letter-spacing:-0.80px">1</span>0 / <span style="margin-left:-2.50px;letter-spacing:-0.80px">1</span>9</div>
<div class="t" style="right:362.50px;text-align:right;top:1861.79px;font-size:28px;font-weight:400;color:#fafafa;letter-spacing:1.7px;"><span style="margin-left:-2.50px;letter-spacing:-0.80px">1</span>7</div>
<div class="t" style="right:238.90px;text-align:right;top:1861.79px;font-size:28px;font-weight:400;color:#fafafa;letter-spacing:0.6px;">$<span style="margin-left:-2.50px;letter-spacing:-1.90px">1</span>.87</div>
<div class="t" style="right:93.80px;text-align:right;top:1861.79px;font-size:28px;font-weight:400;color:#fafafa;letter-spacing:1.7px;">0</div>
<div style="position:absolute;left:622px;top:1993.5px;width:0;height:0;border-left:16px solid #9a9a9a;border-top:8.5px solid transparent;border-bottom:8.5px solid transparent"></div>
<div class="t" style="left:678.50px;top:1989.93px;font-size:27.5px;font-weight:400;color:#fafafa;letter-spacing:0px;font-family:'Liberation Mono',monospace;">6fa2b1c</div>
<div class="t" style="left:843.60px;top:1981.79px;font-size:28px;font-weight:400;color:#fafafa;letter-spacing:1.72px;">AI-assisted refactoring ...</div>
<div class="t" style="left:1251.80px;top:1966.79px;font-size:28px;font-weight:400;color:#fafafa;letter-spacing:2.6px;">atlas-tech/auth-</div>
<div class="t" style="left:1251.80px;top:2008.79px;font-size:28px;font-weight:400;color:#fafafa;letter-spacing:1.35px;">service</div>
<div class="t" style="left:1619.00px;top:1987.79px;font-size:28px;font-weight:400;color:#fafafa;letter-spacing:1.6px;">13/2/2026</div>
<div class="t" style="left:1807.60px;top:1987.79px;font-size:28px;font-weight:400;color:#fafafa;letter-spacing:2.16px;">fix/reliability</div>
<div class="t" style="right:837.00px;text-align:right;top:1987.79px;font-size:28px;font-weight:400;color:#fafafa;letter-spacing:2.3px;"><span style="color:#1fc98e">+<span style="margin-left:-2.50px;letter-spacing:-0.20px">1</span>84</span> / <span style="color:#ef4444">-48</span></div>
<div class="t" style="right:667.50px;text-align:right;top:1987.79px;font-size:28px;font-weight:400;color:#fafafa;letter-spacing:1.7px;"><span style="margin-left:-2.50px;letter-spacing:-0.80px">1</span>9m 33s</div>
<div class="t" style="right:490.30px;text-align:right;top:1987.79px;font-size:28px;font-weight:400;color:#fafafa;letter-spacing:1.7px;"><span style="margin-left:-2.50px;letter-spacing:-0.80px">1</span>0 / <span style="margin-left:-2.50px;letter-spacing:-0.80px">1</span>9</div>
<div class="t" style="right:362.50px;text-align:right;top:1987.79px;font-size:28px;font-weight:400;color:#fafafa;letter-spacing:1.7px;"><span style="margin-left:-2.50px;letter-spacing:-0.80px">1</span>7</div>
<div class="t" style="right:238.90px;text-align:right;top:1987.79px;font-size:28px;font-weight:400;color:#fafafa;letter-spacing:0.6px;">$<span style="margin-left:-2.50px;letter-spacing:-1.90px">1</span>.87</div>
<div class="t" style="right:93.80px;text-align:right;top:1987.79px;font-size:28px;font-weight:400;color:#fafafa;letter-spacing:1.7px;">0</div>
</div></div>
</body></html>
